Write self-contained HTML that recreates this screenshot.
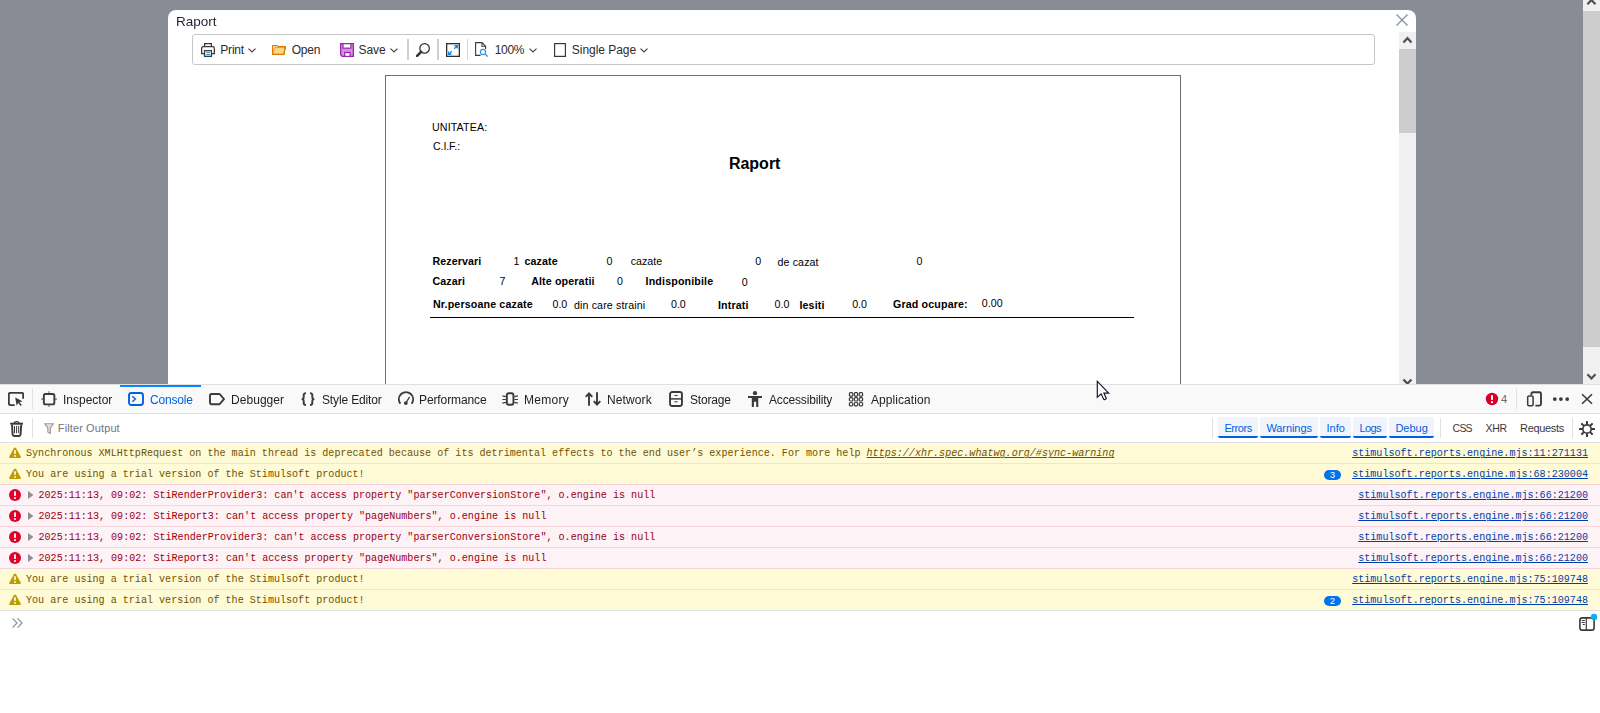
<!DOCTYPE html>
<html><head><meta charset="utf-8"><title>Raport</title>
<style>
html,body{margin:0;padding:0;}
body{width:1600px;height:713px;overflow:hidden;background:#fff;position:relative;font-family:"Liberation Sans",sans-serif;}
.b{position:absolute;display:block;}
.t{position:absolute;white-space:pre;line-height:1;}
</style></head>
<body>
<div class="b" style="left:0px;top:0px;width:1583px;height:384px;background:#898c94;"></div>
<div class="b" style="left:1583px;top:0px;width:17px;height:384px;background:#f0f0f0;"></div>
<div class="b" style="left:1583px;top:11px;width:17px;height:336px;background:#cdcdcd;"></div>
<svg class="b" style="left:1583px;top:-6px;" width="17" height="17" viewBox="0 0 17 17"><path d="M4.4 10.2 L8.45 6 L12.5 10.2" fill="none" stroke="#505050" stroke-width="2.2"/></svg>
<svg class="b" style="left:1583px;top:367px;" width="17" height="17" viewBox="0 0 17 17"><path d="M4.4 7.3 L8.45 11.5 L12.5 7.3" fill="none" stroke="#505050" stroke-width="2.2"/></svg>
<div class="b" style="left:168px;top:10px;width:1248px;height:374px;background:#fff;border-radius:8px 8px 0 0;"></div>
<span class="t" id="t1" style="left:176px;top:14.77px;font-size:13.5px;color:#1e2434;letter-spacing:-0.005px;will-change:transform;">Raport</span>
<svg class="b" style="left:1396px;top:14px;" width="12" height="12" viewBox="0 0 12 12"><path d="M0.5 0.5 L11.5 11.5 M11.5 0.5 L0.5 11.5" stroke="#8a93a5" stroke-width="1.3" fill="none"/></svg>
<div class="b" style="left:1399px;top:32px;width:17px;height:352px;background:#f0f0f0;"></div>
<div class="b" style="left:1399px;top:49px;width:17px;height:84px;background:#cdcdcd;"></div>
<svg class="b" style="left:1399px;top:32px;" width="17" height="17" viewBox="0 0 17 17"><path d="M4.4 10.4 L8.45 6.2 L12.5 10.4" fill="none" stroke="#505050" stroke-width="2.2"/></svg>
<svg class="b" style="left:1399px;top:367px;" width="17" height="17" viewBox="0 0 17 17"><path d="M4.4 12.4 L8.45 16.6 L12.5 12.4" fill="none" stroke="#505050" stroke-width="2.2"/></svg>
<div class="b" style="left:192px;top:34px;width:1183px;height:31px;background:#fff;border:1px solid #c6c6c6;border-radius:3px;box-sizing:border-box;"></div>
<svg class="b" style="left:201px;top:43px;" width="14" height="14" viewBox="0 0 14 14"><path d="M3.6 3.5V0.65h6.8v2.85" fill="none" stroke="#383838" stroke-width="1.25"/>
<path d="M3.2 10.7H0.65V5.3Q0.65 3.7 2.25 3.7H11.75Q13.35 3.7 13.35 5.3V10.7H10.8" fill="none" stroke="#383838" stroke-width="1.25"/>
<rect x="3.55" y="7.65" width="6.9" height="5.7" fill="#fff" stroke="#383838" stroke-width="1.25"/>
<path d="M5.3 9.6h3.6M5.3 11.5h3.6" stroke="#1e88d2" stroke-width="1"/></svg>
<span class="t" id="t2" style="left:220.3px;top:44.02px;font-size:12px;color:#2b2b2b;letter-spacing:-0.198px;">Print</span>
<svg class="b" style="left:248px;top:48px;" width="8" height="5" viewBox="0 0 8 5"><path d="M0.5 0.6 L4 4 L7.5 0.6" fill="none" stroke="#484848" stroke-width="1.25"/></svg>
<svg class="b" style="left:272px;top:45px;" width="14" height="10" viewBox="0 0 14 10"><path d="M0.6 9.4V0.6H5.2L6.2 1.6H13.4L11.8 9.4Z" fill="#fff" stroke="#e37400" stroke-width="1.15" stroke-linejoin="round"/>
<path d="M0.75 9.4L2.5 2.6H13.1L11.7 9.4Z" fill="#f7d98c" stroke="#e88c24" stroke-width="0.9" stroke-linejoin="round"/>
<path d="M0.6 9.4H11.8L13.4 1.6" fill="none" stroke="#e37400" stroke-width="1.15" stroke-linejoin="round"/></svg>
<span class="t" id="t3" style="left:291.7px;top:44.02px;font-size:12px;color:#2b2b2b;letter-spacing:-0.215px;">Open</span>
<svg class="b" style="left:340px;top:43px;" width="14" height="14" viewBox="0 0 14 14"><path d="M0.65 0.65H13.35V13.35H2.3L0.65 11.7Z" fill="#d692de" stroke="#9a25ae" stroke-width="1.3"/>
<rect x="3" y="0.65" width="7.9" height="4.5" fill="#fff" stroke="#9a25ae" stroke-width="1.2"/>
<rect x="4.7" y="9.5" width="5.4" height="3.9" fill="#fff" stroke="#9a25ae" stroke-width="1.2"/></svg>
<span class="t" id="t4" style="left:358.6px;top:44.02px;font-size:12px;color:#2b2b2b;letter-spacing:-0.090px;">Save</span>
<svg class="b" style="left:390px;top:48px;" width="8" height="5" viewBox="0 0 8 5"><path d="M0.5 0.6 L4 4 L7.5 0.6" fill="none" stroke="#484848" stroke-width="1.25"/></svg>
<div class="b" style="left:407px;top:39px;width:2px;height:21px;background:#d0d0d0;"></div>
<svg class="b" style="left:416px;top:43px;" width="14" height="14" viewBox="0 0 14 14"><circle cx="8.6" cy="5.4" r="4.75" fill="none" stroke="#333" stroke-width="1.25"/>
<path d="M5.1 8.9 L1.1 12.9" stroke="#333" stroke-width="2.6" stroke-linecap="round"/></svg>
<div class="b" style="left:437px;top:39px;width:2px;height:21px;background:#d0d0d0;"></div>
<svg class="b" style="left:446px;top:43px;" width="14" height="14" viewBox="0 0 14 14"><rect x="0.65" y="0.65" width="12.7" height="12.7" fill="#fff" stroke="#2d2d2d" stroke-width="1.3"/>
<path d="M8.2 5.8 L11.2 2.8 M8.4 2.6h3v3 M5.8 8.2 L2.8 11.2 M2.6 8.4v3h3" fill="none" stroke="#1e88d2" stroke-width="1.25"/></svg>
<div class="b" style="left:467px;top:39px;width:1px;height:21px;background:#d6d6d6;"></div>
<svg class="b" style="left:475px;top:42px;" width="13" height="15" viewBox="0 0 13 15"><path d="M5.6 13.4H0.6V0.6H7L10.6 4.2V7" fill="none" stroke="#3a3a3a" stroke-width="1.1"/>
<path d="M7 0.6V4.2H10.6" fill="none" stroke="#3a3a3a" stroke-width="1.1"/>
<circle cx="8" cy="10" r="2.6" fill="#fff" stroke="#2a96d8" stroke-width="1.1"/>
<path d="M10 12 L12.6 14.6" stroke="#2a96d8" stroke-width="1.3"/></svg>
<span class="t" id="t5" style="left:494.8px;top:44.02px;font-size:12px;color:#2b2b2b;letter-spacing:-0.376px;">100%</span>
<svg class="b" style="left:529px;top:48px;" width="8" height="5" viewBox="0 0 8 5"><path d="M0.5 0.6 L4 4 L7.5 0.6" fill="none" stroke="#484848" stroke-width="1.25"/></svg>
<svg class="b" style="left:554px;top:43px;" width="12" height="14" viewBox="0 0 12 14"><rect x="0.6" y="0.6" width="10.8" height="12.8" fill="#fff" stroke="#3a3a3a" stroke-width="1.2"/></svg>
<span class="t" id="t6" style="left:571.8px;top:44.02px;font-size:12px;color:#2b2b2b;letter-spacing:-0.038px;">Single Page</span>
<svg class="b" style="left:640px;top:48px;" width="8" height="5" viewBox="0 0 8 5"><path d="M0.5 0.6 L4 4 L7.5 0.6" fill="none" stroke="#484848" stroke-width="1.25"/></svg>
<div class="b" style="left:385px;top:75px;width:796px;height:320px;background:#fff;border:1px solid #6e6e6e;box-sizing:border-box;"></div>
<span class="t" id="t7" style="left:432px;top:121.68px;font-size:10.67px;color:#000;letter-spacing:0.136px;">UNITATEA:</span>
<span class="t" id="t8" style="left:433px;top:140.69px;font-size:10.67px;color:#000;letter-spacing:-0.118px;">C.I.F.:</span>
<span class="t" id="t9" style="left:728.9px;top:155.52px;font-size:16px;color:#000;font-weight:bold;">Raport</span>
<span class="t" id="t10" style="left:432.4px;top:255.69px;font-size:10.67px;color:#000;font-weight:bold;letter-spacing:0.113px;">Rezervari</span>
<span class="t" id="t11" style="left:513.6px;top:255.69px;font-size:10.67px;color:#000;">1</span>
<span class="t" id="t12" style="left:524.5px;top:255.69px;font-size:10.67px;color:#000;font-weight:bold;letter-spacing:0.118px;">cazate</span>
<span class="t" id="t13" style="left:606.6px;top:255.69px;font-size:10.67px;color:#000;">0</span>
<span class="t" id="t14" style="left:630.7px;top:255.69px;font-size:10.67px;color:#000;letter-spacing:0.032px;">cazate</span>
<span class="t" id="t15" style="left:755.2px;top:255.69px;font-size:10.67px;color:#000;">0</span>
<span class="t" id="t16" style="left:777.5px;top:256.69px;font-size:10.67px;color:#000;letter-spacing:0.113px;">de cazat</span>
<span class="t" id="t17" style="left:916.6px;top:255.69px;font-size:10.67px;color:#000;">0</span>
<span class="t" id="t18" style="left:432.4px;top:275.69px;font-size:10.67px;color:#000;font-weight:bold;letter-spacing:0.103px;">Cazari</span>
<span class="t" id="t19" style="left:499.6px;top:275.69px;font-size:10.67px;color:#000;">7</span>
<span class="t" id="t20" style="left:531.2px;top:275.69px;font-size:10.67px;color:#000;font-weight:bold;letter-spacing:0.139px;">Alte operatii</span>
<span class="t" id="t21" style="left:617px;top:275.69px;font-size:10.67px;color:#000;">0</span>
<span class="t" id="t22" style="left:645.6px;top:275.69px;font-size:10.67px;color:#000;font-weight:bold;letter-spacing:0.152px;">Indisponibile</span>
<span class="t" id="t23" style="left:741.8px;top:276.69px;font-size:10.67px;color:#000;">0</span>
<span class="t" id="t24" style="left:433px;top:298.69px;font-size:10.67px;color:#000;font-weight:bold;letter-spacing:0.148px;">Nr.persoane cazate</span>
<span class="t" id="t25" style="left:552.5px;top:298.69px;font-size:10.67px;color:#000;letter-spacing:-0.009px;">0.0</span>
<span class="t" id="t26" style="left:574px;top:299.69px;font-size:10.67px;color:#000;letter-spacing:0.119px;">din care straini</span>
<span class="t" id="t27" style="left:671px;top:298.69px;font-size:10.67px;color:#000;letter-spacing:-0.009px;">0.0</span>
<span class="t" id="t28" style="left:718px;top:299.69px;font-size:10.67px;color:#000;font-weight:bold;letter-spacing:0.127px;">Intrati</span>
<span class="t" id="t29" style="left:774.6px;top:298.69px;font-size:10.67px;color:#000;letter-spacing:-0.009px;">0.0</span>
<span class="t" id="t30" style="left:799.5px;top:299.69px;font-size:10.67px;color:#000;font-weight:bold;letter-spacing:0.117px;">Iesiti</span>
<span class="t" id="t31" style="left:852.2px;top:298.69px;font-size:10.67px;color:#000;letter-spacing:-0.009px;">0.0</span>
<span class="t" id="t32" style="left:893px;top:298.69px;font-size:10.67px;color:#000;font-weight:bold;letter-spacing:0.150px;">Grad ocupare:</span>
<span class="t" id="t33" style="left:981.8px;top:297.69px;font-size:10.67px;color:#000;letter-spacing:0.037px;">0.00</span>
<div class="b" style="left:430px;top:317px;width:704px;height:1px;background:#000;"></div>
<div class="b" style="left:0px;top:384px;width:1600px;height:329px;background:#fff;"></div>
<div class="b" style="left:0px;top:384px;width:1600px;height:30px;background:#f9f9fa;border-top:1px solid #e0e0e2;border-bottom:1px solid #e0e0e2;box-sizing:border-box;"></div>
<svg class="b" style="left:8px;top:392px;" width="16" height="14" viewBox="0 0 16 14"><path d="M6 13.1H2.6Q0.8 13.1 0.8 11.3V2.6Q0.8 0.8 2.6 0.8H13.4Q15.2 0.8 15.2 2.6V6" fill="none" stroke="#3a3a3d" stroke-width="1.9" stroke-linecap="round"/>
<path d="M7.2 5.6 L14.4 9.2 L11.6 10.2 L13.8 13 L12.6 13.9 L10.4 11.1 L8.6 13.4Z" fill="#3a3a3d"/></svg>
<div class="b" style="left:32px;top:389px;width:1px;height:20px;background:#e0e0e2;"></div>
<div class="b" style="left:120px;top:385px;width:81px;height:2px;background:#0a84ff;"></div>
<svg class="b" style="left:41px;top:391px;" width="16" height="16" viewBox="0 0 16 16"><rect x="2.85" y="3.05" width="10.5" height="10.3" rx="1.6" fill="none" stroke="#3a3a3d" stroke-width="1.9"/><path d="M8 0.2v2.2M8 14v2M0.2 8.1h2M14 8.1h2" stroke="#3a3a3d" stroke-width="1.1" opacity="0.75"/></svg>
<span class="t" id="t34" style="left:62.9px;top:394.02px;font-size:12px;color:#222226;letter-spacing:-0.007px;will-change:transform;">Inspector</span>
<svg class="b" style="left:128px;top:391px;" width="16" height="16" viewBox="0 0 16 16"><rect x="1" y="2" width="14" height="12" rx="2.4" fill="none" stroke="#0060df" stroke-width="1.9"/><path d="M4.3 5.2 L7.4 8 L4.3 10.8" fill="none" stroke="#0060df" stroke-width="1.4"/></svg>
<span class="t" id="t35" style="left:150.3px;top:394.02px;font-size:12px;color:#0060df;letter-spacing:-0.204px;will-change:transform;">Console</span>
<svg class="b" style="left:209px;top:391px;" width="16" height="16" viewBox="0 0 16 16"><path d="M2.6 3H10.6L15 8.1L10.6 13.2H2.6Q1 13.2 1 11.6V4.6Q1 3 2.6 3Z" fill="none" stroke="#3a3a3d" stroke-width="1.9" stroke-linejoin="round"/></svg>
<span class="t" id="t36" style="left:230.9px;top:394.02px;font-size:12px;color:#222226;letter-spacing:0.048px;will-change:transform;">Debugger</span>
<svg class="b" style="left:300px;top:391px;" width="16" height="16" viewBox="0 0 16 16"><path d="M6 2.1Q3.7 2.1 3.7 4.1V6.2Q3.7 8.1 1.6 8.1Q3.7 8.1 3.7 10V12.1Q3.7 14.1 6 14.1M10 2.1Q12.3 2.1 12.3 4.1V6.2Q12.3 8.1 14.4 8.1Q12.3 8.1 12.3 10V12.1Q12.3 14.1 10 14.1" fill="none" stroke="#3a3a3d" stroke-width="1.9"/></svg>
<span class="t" id="t37" style="left:321.9px;top:394.02px;font-size:12px;color:#222226;letter-spacing:-0.147px;will-change:transform;">Style Editor</span>
<svg class="b" style="left:398px;top:391px;" width="16" height="16" viewBox="0 0 16 16"><path d="M1.9 11.9A7.1 7.1 0 1 1 14.1 11.9" fill="none" stroke="#3a3a3d" stroke-width="1.9" stroke-linecap="round"/><path d="M7.85 12 L11.3 6.4" stroke="#3a3a3d" stroke-width="1.3" stroke-linecap="round"/><circle cx="7.85" cy="12.05" r="1.9" fill="#3a3a3d"/></svg>
<span class="t" id="t38" style="left:419.2px;top:394.02px;font-size:12px;color:#222226;letter-spacing:-0.109px;will-change:transform;">Performance</span>
<svg class="b" style="left:502px;top:391px;" width="16" height="16" viewBox="0 0 16 16"><rect x="4.85" y="2.25" width="6.6" height="11.5" rx="2" fill="none" stroke="#3a3a3d" stroke-width="1.9"/><path d="M0.4 4.9L3.9 5.6M0.4 8.5H3.9M0.4 12.1L3.9 11.4M15.9 4.9L12.4 5.6M15.9 8.5H12.4M15.9 12.1L12.4 11.4" stroke="#3a3a3d" stroke-width="1.1"/></svg>
<span class="t" id="t39" style="left:523.8px;top:394.02px;font-size:12px;color:#222226;letter-spacing:0.276px;will-change:transform;">Memory</span>
<svg class="b" style="left:585px;top:391px;" width="16" height="16" viewBox="0 0 16 16"><path d="M4 14.7V2.4M0.7 5.8L4 2.3L7.3 5.8M12 1.3V13.6M8.7 10.2L12 13.7L15.3 10.2" fill="none" stroke="#3a3a3d" stroke-width="1.9"/></svg>
<span class="t" id="t40" style="left:607px;top:394.02px;font-size:12px;color:#222226;letter-spacing:0.112px;will-change:transform;">Network</span>
<svg class="b" style="left:668px;top:391px;" width="16" height="16" viewBox="0 0 16 16"><rect x="2.05" y="1.05" width="11.9" height="13.9" rx="2.2" fill="none" stroke="#3a3a3d" stroke-width="1.9"/><path d="M2 7.9h12" stroke="#3a3a3d" stroke-width="1.5"/><path d="M6.5 4.5h3.2M6.5 10.8h3.2" stroke="#3a3a3d" stroke-width="1"/></svg>
<span class="t" id="t41" style="left:689.5px;top:394.02px;font-size:12px;color:#222226;letter-spacing:-0.190px;will-change:transform;">Storage</span>
<svg class="b" style="left:747px;top:391px;" width="16" height="16" viewBox="0 0 16 16"><circle cx="8" cy="2.15" r="2.1" fill="#3a3a3d"/><path d="M1 5H15V7H11.3V16H9.2V10.7H6.9V16H4.8V7H1Z" fill="#3a3a3d"/></svg>
<span class="t" id="t42" style="left:769.1px;top:394.02px;font-size:12px;color:#222226;letter-spacing:-0.166px;will-change:transform;">Accessibility</span>
<svg class="b" style="left:848px;top:391px;" width="16" height="16" viewBox="0 0 16 16"><rect x="1.4" y="1.7" width="3.4" height="3.4" rx="1.1" fill="none" stroke="#3a3a3d" stroke-width="1.2"/><rect x="1.4" y="6.6000000000000005" width="3.4" height="3.4" rx="1.1" fill="none" stroke="#3a3a3d" stroke-width="1.2"/><rect x="1.4" y="11.5" width="3.4" height="3.4" rx="1.1" fill="none" stroke="#3a3a3d" stroke-width="1.2"/><rect x="6.300000000000001" y="1.7" width="3.4" height="3.4" rx="1.1" fill="none" stroke="#3a3a3d" stroke-width="1.2"/><rect x="6.300000000000001" y="6.6000000000000005" width="3.4" height="3.4" rx="1.1" fill="none" stroke="#3a3a3d" stroke-width="1.2"/><rect x="6.300000000000001" y="11.5" width="3.4" height="3.4" rx="1.1" fill="none" stroke="#3a3a3d" stroke-width="1.2"/><rect x="11.200000000000001" y="1.7" width="3.4" height="3.4" rx="1.1" fill="none" stroke="#3a3a3d" stroke-width="1.2"/><rect x="11.200000000000001" y="6.6000000000000005" width="3.4" height="3.4" rx="1.1" fill="none" stroke="#3a3a3d" stroke-width="1.2"/><rect x="11.200000000000001" y="11.5" width="3.4" height="3.4" rx="1.1" fill="none" stroke="#3a3a3d" stroke-width="1.2"/></svg>
<span class="t" id="t43" style="left:870.6px;top:394.02px;font-size:12px;color:#222226;letter-spacing:0.062px;will-change:transform;">Application</span>
<svg class="b" style="left:1485px;top:392px;" width="14" height="14" viewBox="0 0 14 14"><circle cx="7" cy="7" r="6.2" fill="#d70022"/><rect x="6" y="3" width="2" height="5" rx="0.7" fill="#fff"/><circle cx="7" cy="10.2" r="1.15" fill="#fff"/></svg>
<span class="t" id="t44" style="left:1501px;top:393.52px;font-size:11px;color:#6a6a6a;">4</span>
<div class="b" style="left:1516px;top:389px;width:1px;height:20px;background:#e0e0e2;"></div>
<svg class="b" style="left:1526px;top:391px;" width="16" height="16" viewBox="0 0 16 16"><path d="M5.4 4V2.7Q5.4 1.2 6.9 1.2H13.5Q15 1.2 15 2.7V13.1Q15 14.6 13.5 14.6H9.4" fill="none" stroke="#3a3a3d" stroke-width="1.9"/><rect x="1.7" y="4.9" width="5.4" height="9.9" rx="1.2" fill="none" stroke="#3a3a3d" stroke-width="1.5"/></svg>
<svg class="b" style="left:1552px;top:396px;" width="18" height="6" viewBox="0 0 18 6"><circle cx="2.8" cy="3.05" r="1.9" fill="#3a3a3d"/><circle cx="8.9" cy="3.05" r="1.9" fill="#3a3a3d"/><circle cx="15.2" cy="3.05" r="1.9" fill="#3a3a3d"/></svg>
<svg class="b" style="left:1581px;top:393px;" width="12" height="12" viewBox="0 0 12 12"><path d="M1.1 1.2L11 10.8M11 1.2L1.1 10.8" stroke="#3a3a3d" stroke-width="1.6"/></svg>
<div class="b" style="left:0px;top:442px;width:1600px;height:1px;background:#e0e0e2;"></div>
<svg class="b" style="left:10px;top:421px;" width="14" height="16" viewBox="0 0 14 16"><path d="M0.2 2.7H13" stroke="#3a3a3d" stroke-width="2"/><path d="M4.4 1.9Q4.4 0.6 6.6 0.6Q8.8 0.6 8.8 1.9" fill="none" stroke="#3a3a3d" stroke-width="1.2"/>
<path d="M2 3.6L2.6 13.4Q2.7 15 4.3 15H8.9Q10.5 15 10.6 13.4L11.2 3.6" fill="none" stroke="#3a3a3d" stroke-width="1.9"/>
<path d="M4.5 4.9V12.2M6.6 4.9V12.2M8.7 4.9V12.2" stroke="#3a3a3d" stroke-width="1"/></svg>
<div class="b" style="left:32px;top:418px;width:1px;height:20px;background:#e0e0e2;"></div>
<svg class="b" style="left:44px;top:423px;" width="11" height="12" viewBox="0 0 11 12"><path d="M0.7 0.7H9.5L6.4 4.8V10.6L3.8 9V4.8Z" fill="#e2e2e4" stroke="#99999d" stroke-width="1.1" stroke-linejoin="round"/></svg>
<span class="t" id="t45" style="left:57.8px;top:422.52px;font-size:11px;color:#73737c;letter-spacing:0.113px;">Filter Output</span>
<div class="b" style="left:1212px;top:418px;width:1px;height:20px;background:#e0e0e2;"></div>
<div class="b" style="left:1218px;top:417px;width:40px;height:21px;background:#f0f4fc;border-bottom:2px solid #0060df;border-radius:2px;box-sizing:border-box;"></div>
<span class="t" id="t46" style="left:1224.4px;top:422.52px;font-size:11px;color:#0060df;letter-spacing:-0.409px;">Errors</span>
<div class="b" style="left:1260px;top:417px;width:58px;height:21px;background:#f0f4fc;border-bottom:2px solid #0060df;border-radius:2px;box-sizing:border-box;"></div>
<span class="t" id="t47" style="left:1266.4px;top:422.52px;font-size:11px;color:#0060df;letter-spacing:-0.070px;">Warnings</span>
<div class="b" style="left:1320px;top:417px;width:31px;height:21px;background:#f0f4fc;border-bottom:2px solid #0060df;border-radius:2px;box-sizing:border-box;"></div>
<span class="t" id="t48" style="left:1326.4px;top:422.52px;font-size:11px;color:#0060df;letter-spacing:0.035px;">Info</span>
<div class="b" style="left:1353px;top:417px;width:34px;height:21px;background:#f0f4fc;border-bottom:2px solid #0060df;border-radius:2px;box-sizing:border-box;"></div>
<span class="t" id="t49" style="left:1359.4px;top:422.52px;font-size:11px;color:#0060df;letter-spacing:-0.590px;">Logs</span>
<div class="b" style="left:1389px;top:417px;width:45px;height:21px;background:#f0f4fc;border-bottom:2px solid #0060df;border-radius:2px;box-sizing:border-box;"></div>
<span class="t" id="t50" style="left:1395.4px;top:422.52px;font-size:11px;color:#0060df;letter-spacing:0.016px;">Debug</span>
<div class="b" style="left:1440px;top:418px;width:1px;height:20px;background:#e0e0e2;"></div>
<span class="t" id="t51" style="left:1452.6px;top:422.77px;font-size:10.5px;color:#38383d;letter-spacing:-0.798px;">CSS</span>
<span class="t" id="t52" style="left:1485.6px;top:422.77px;font-size:10.5px;color:#38383d;letter-spacing:-0.391px;">XHR</span>
<span class="t" id="t53" style="left:1520px;top:422.52px;font-size:11px;color:#38383d;letter-spacing:-0.311px;">Requests</span>
<div class="b" style="left:1572px;top:418px;width:1px;height:20px;background:#e0e0e2;"></div>
<svg class="b" style="left:1579px;top:421px;" width="16" height="16" viewBox="0 0 16 16"><rect x="7" y="0" width="2" height="3.4" rx="0.5" fill="#3a3a3d" transform="rotate(0 8 8)"/><rect x="7" y="0" width="2" height="3.4" rx="0.5" fill="#3a3a3d" transform="rotate(45 8 8)"/><rect x="7" y="0" width="2" height="3.4" rx="0.5" fill="#3a3a3d" transform="rotate(90 8 8)"/><rect x="7" y="0" width="2" height="3.4" rx="0.5" fill="#3a3a3d" transform="rotate(135 8 8)"/><rect x="7" y="0" width="2" height="3.4" rx="0.5" fill="#3a3a3d" transform="rotate(180 8 8)"/><rect x="7" y="0" width="2" height="3.4" rx="0.5" fill="#3a3a3d" transform="rotate(225 8 8)"/><rect x="7" y="0" width="2" height="3.4" rx="0.5" fill="#3a3a3d" transform="rotate(270 8 8)"/><rect x="7" y="0" width="2" height="3.4" rx="0.5" fill="#3a3a3d" transform="rotate(315 8 8)"/><circle cx="8" cy="8" r="4.2" fill="none" stroke="#3a3a3d" stroke-width="1.7"/></svg>
<div class="b" style="left:0px;top:442px;width:1600px;height:21px;background:#fffbd6;border-top:1px solid #e0e0e2;box-sizing:border-box;"></div>
<svg class="b" style="left:9px;top:447px;" width="12" height="12" viewBox="0 0 12 12"><path d="M6 0.5Q6.7 0.5 7.1 1.2L11.7 9.6Q12.3 11 10.8 11H1.2Q-0.3 11 0.3 9.6L4.9 1.2Q5.3 0.5 6 0.5Z" fill="#be9b00"/><rect x="5.1" y="3.2" width="1.8" height="3.8" rx="0.4" fill="#fffbd6"/><rect x="5.1" y="8" width="1.8" height="1.8" rx="0.4" fill="#fffbd6"/></svg>
<span class="t" id="t54" style="left:26px;top:449.48px;font-size:10.08px;color:#715100;font-family:'Liberation Mono', monospace;letter-spacing:-0.001px;">Synchronous XMLHttpRequest on the main thread is deprecated because of its detrimental effects to the end user’s experience. For more help </span>
<span class="t" id="t55" style="left:866.533px;top:449.48px;font-size:10.08px;color:#715100;font-style:italic;text-decoration:underline;font-family:'Liberation Mono', monospace;letter-spacing:-0.001px;">https://xhr.spec.whatwg.org/#sync-warning</span>
<span class="t" id="t56" style="left:1352.167px;top:449.48px;font-size:10.08px;color:#003eaa;text-decoration:underline;font-family:'Liberation Mono', monospace;letter-spacing:-0.001px;">stimulsoft.reports.engine.mjs:11:271131</span>
<div class="b" style="left:0px;top:463px;width:1600px;height:21px;background:#fffbd6;border-top:1px solid #f9e9a4;box-sizing:border-box;"></div>
<svg class="b" style="left:9px;top:468px;" width="12" height="12" viewBox="0 0 12 12"><path d="M6 0.5Q6.7 0.5 7.1 1.2L11.7 9.6Q12.3 11 10.8 11H1.2Q-0.3 11 0.3 9.6L4.9 1.2Q5.3 0.5 6 0.5Z" fill="#be9b00"/><rect x="5.1" y="3.2" width="1.8" height="3.8" rx="0.4" fill="#fffbd6"/><rect x="5.1" y="8" width="1.8" height="1.8" rx="0.4" fill="#fffbd6"/></svg>
<span class="t" id="t57" style="left:26px;top:470.48px;font-size:10.08px;color:#715100;font-family:'Liberation Mono', monospace;letter-spacing:-0.001px;">You are using a trial version of the Stimulsoft product!</span>
<span class="t" id="t58" style="left:1352.167px;top:470.48px;font-size:10.08px;color:#003eaa;text-decoration:underline;font-family:'Liberation Mono', monospace;letter-spacing:-0.001px;">stimulsoft.reports.engine.mjs:68:230004</span>
<div class="b" style="left:1324px;top:470px;width:17px;height:10px;background:#0074e8;border-radius:5px;"></div>
<span class="t" id="t59" style="left:1330px;top:470.72px;font-size:9px;color:#fff;">3</span>
<div class="b" style="left:0px;top:484px;width:1600px;height:21px;background:#fdf2f5;border-top:1px solid #f8d4dc;box-sizing:border-box;"></div>
<svg class="b" style="left:9px;top:489px;" width="12" height="12" viewBox="0 0 12 12"><circle cx="6" cy="6" r="6" fill="#e0002a"/><rect x="5.1" y="2.3" width="1.8" height="4.6" rx="0.6" fill="#fff"/><circle cx="6" cy="9.1" r="1.05" fill="#fff"/></svg>
<svg class="b" style="left:28px;top:491px;" width="6" height="8" viewBox="0 0 6 8"><path d="M0 0L5.4 4L0 8Z" fill="#8e8e92"/></svg>
<span class="t" id="t60" style="left:38.5px;top:491.48px;font-size:10.08px;color:#9c000e;font-family:'Liberation Mono', monospace;letter-spacing:-0.001px;">2025:11:13, 09:02: StiRenderProvider3: can't access property "parserConversionStore", o.engine is null</span>
<span class="t" id="t61" style="left:1358.214px;top:491.48px;font-size:10.08px;color:#003eaa;text-decoration:underline;font-family:'Liberation Mono', monospace;letter-spacing:-0.001px;">stimulsoft.reports.engine.mjs:66:21200</span>
<div class="b" style="left:0px;top:505px;width:1600px;height:21px;background:#fdf2f5;border-top:1px solid #f8d4dc;box-sizing:border-box;"></div>
<svg class="b" style="left:9px;top:510px;" width="12" height="12" viewBox="0 0 12 12"><circle cx="6" cy="6" r="6" fill="#e0002a"/><rect x="5.1" y="2.3" width="1.8" height="4.6" rx="0.6" fill="#fff"/><circle cx="6" cy="9.1" r="1.05" fill="#fff"/></svg>
<svg class="b" style="left:28px;top:512px;" width="6" height="8" viewBox="0 0 6 8"><path d="M0 0L5.4 4L0 8Z" fill="#8e8e92"/></svg>
<span class="t" id="t62" style="left:38.5px;top:512.48px;font-size:10.08px;color:#9c000e;font-family:'Liberation Mono', monospace;letter-spacing:-0.001px;">2025:11:13, 09:02: StiReport3: can't access property "pageNumbers", o.engine is null</span>
<span class="t" id="t63" style="left:1358.214px;top:512.48px;font-size:10.08px;color:#003eaa;text-decoration:underline;font-family:'Liberation Mono', monospace;letter-spacing:-0.001px;">stimulsoft.reports.engine.mjs:66:21200</span>
<div class="b" style="left:0px;top:526px;width:1600px;height:21px;background:#fdf2f5;border-top:1px solid #f8d4dc;box-sizing:border-box;"></div>
<svg class="b" style="left:9px;top:531px;" width="12" height="12" viewBox="0 0 12 12"><circle cx="6" cy="6" r="6" fill="#e0002a"/><rect x="5.1" y="2.3" width="1.8" height="4.6" rx="0.6" fill="#fff"/><circle cx="6" cy="9.1" r="1.05" fill="#fff"/></svg>
<svg class="b" style="left:28px;top:533px;" width="6" height="8" viewBox="0 0 6 8"><path d="M0 0L5.4 4L0 8Z" fill="#8e8e92"/></svg>
<span class="t" id="t64" style="left:38.5px;top:533.48px;font-size:10.08px;color:#9c000e;font-family:'Liberation Mono', monospace;letter-spacing:-0.001px;">2025:11:13, 09:02: StiRenderProvider3: can't access property "parserConversionStore", o.engine is null</span>
<span class="t" id="t65" style="left:1358.214px;top:533.48px;font-size:10.08px;color:#003eaa;text-decoration:underline;font-family:'Liberation Mono', monospace;letter-spacing:-0.001px;">stimulsoft.reports.engine.mjs:66:21200</span>
<div class="b" style="left:0px;top:547px;width:1600px;height:21px;background:#fdf2f5;border-top:1px solid #f8d4dc;box-sizing:border-box;"></div>
<svg class="b" style="left:9px;top:552px;" width="12" height="12" viewBox="0 0 12 12"><circle cx="6" cy="6" r="6" fill="#e0002a"/><rect x="5.1" y="2.3" width="1.8" height="4.6" rx="0.6" fill="#fff"/><circle cx="6" cy="9.1" r="1.05" fill="#fff"/></svg>
<svg class="b" style="left:28px;top:554px;" width="6" height="8" viewBox="0 0 6 8"><path d="M0 0L5.4 4L0 8Z" fill="#8e8e92"/></svg>
<span class="t" id="t66" style="left:38.5px;top:554.48px;font-size:10.08px;color:#9c000e;font-family:'Liberation Mono', monospace;letter-spacing:-0.001px;">2025:11:13, 09:02: StiReport3: can't access property "pageNumbers", o.engine is null</span>
<span class="t" id="t67" style="left:1358.214px;top:554.48px;font-size:10.08px;color:#003eaa;text-decoration:underline;font-family:'Liberation Mono', monospace;letter-spacing:-0.001px;">stimulsoft.reports.engine.mjs:66:21200</span>
<div class="b" style="left:0px;top:568px;width:1600px;height:21px;background:#fffbd6;border-top:1px solid #f8d4dc;box-sizing:border-box;"></div>
<svg class="b" style="left:9px;top:573px;" width="12" height="12" viewBox="0 0 12 12"><path d="M6 0.5Q6.7 0.5 7.1 1.2L11.7 9.6Q12.3 11 10.8 11H1.2Q-0.3 11 0.3 9.6L4.9 1.2Q5.3 0.5 6 0.5Z" fill="#be9b00"/><rect x="5.1" y="3.2" width="1.8" height="3.8" rx="0.4" fill="#fffbd6"/><rect x="5.1" y="8" width="1.8" height="1.8" rx="0.4" fill="#fffbd6"/></svg>
<span class="t" id="t68" style="left:26px;top:575.48px;font-size:10.08px;color:#715100;font-family:'Liberation Mono', monospace;letter-spacing:-0.001px;">You are using a trial version of the Stimulsoft product!</span>
<span class="t" id="t69" style="left:1352.167px;top:575.48px;font-size:10.08px;color:#003eaa;text-decoration:underline;font-family:'Liberation Mono', monospace;letter-spacing:-0.001px;">stimulsoft.reports.engine.mjs:75:109748</span>
<div class="b" style="left:0px;top:589px;width:1600px;height:21px;background:#fffbd6;border-top:1px solid #f9e9a4;box-sizing:border-box;"></div>
<svg class="b" style="left:9px;top:594px;" width="12" height="12" viewBox="0 0 12 12"><path d="M6 0.5Q6.7 0.5 7.1 1.2L11.7 9.6Q12.3 11 10.8 11H1.2Q-0.3 11 0.3 9.6L4.9 1.2Q5.3 0.5 6 0.5Z" fill="#be9b00"/><rect x="5.1" y="3.2" width="1.8" height="3.8" rx="0.4" fill="#fffbd6"/><rect x="5.1" y="8" width="1.8" height="1.8" rx="0.4" fill="#fffbd6"/></svg>
<span class="t" id="t70" style="left:26px;top:596.48px;font-size:10.08px;color:#715100;font-family:'Liberation Mono', monospace;letter-spacing:-0.001px;">You are using a trial version of the Stimulsoft product!</span>
<span class="t" id="t71" style="left:1352.167px;top:596.48px;font-size:10.08px;color:#003eaa;text-decoration:underline;font-family:'Liberation Mono', monospace;letter-spacing:-0.001px;">stimulsoft.reports.engine.mjs:75:109748</span>
<div class="b" style="left:1324px;top:596px;width:17px;height:10px;background:#0074e8;border-radius:5px;"></div>
<span class="t" id="t72" style="left:1330px;top:596.72px;font-size:9px;color:#fff;">2</span>
<div class="b" style="left:0px;top:610px;width:1600px;height:1px;background:#e0e0e2;"></div>
<svg class="b" style="left:12px;top:618px;" width="11" height="10" viewBox="0 0 11 10"><path d="M0.6 0.4L5 5L0.6 9.6M5.6 0.4L10 5L5.6 9.6" fill="none" stroke="#8f8f9d" stroke-width="1.2"/></svg>
<svg class="b" style="left:1579px;top:617px;" width="16" height="14" viewBox="0 0 16 14"><rect x="0.9" y="0.9" width="14.2" height="12.2" rx="2.4" fill="none" stroke="#3a3a3d" stroke-width="1.6"/><path d="M7.3 1V13" stroke="#3a3a3d" stroke-width="1.2"/><path d="M2.7 3.5h3.1M2.7 5.5h3.1M3.7 7.5h2.1" stroke="#3a3a3d" stroke-width="1"/></svg>
<svg class="b" style="left:1590px;top:613px;" width="8" height="8" viewBox="0 0 8 8"><circle cx="4" cy="4" r="3.2" fill="#00b3f4"/></svg>
<svg class="b" style="left:1096px;top:380px;" width="15" height="22" viewBox="0 0 15 22"><path d="M1.3 1.4V17.3L5.2 13.9L7.75 19.4Q9.1 20.1 10.3 18.4L7.9 13.1H12.7Z" fill="#fff" stroke="#12122a" stroke-width="1.15" stroke-linejoin="miter"/></svg>
</body></html>
